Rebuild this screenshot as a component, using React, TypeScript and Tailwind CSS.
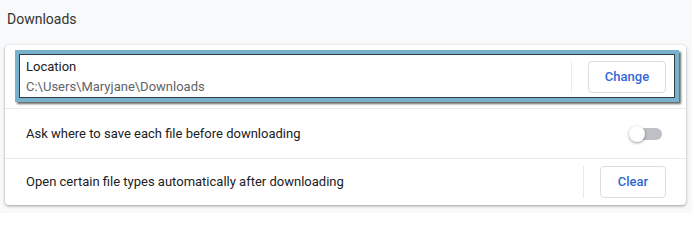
const Separator = () => <div className="w-px h-8 bg-[#e8eaed]" />;

const OutlineButton = ({ label, width }: { label: string; width: string }) => (
  <button
    className={`h-8 ${width} rounded border border-[#dadce0] bg-white text-[13px] font-medium text-[#3367d6]`}
  >
    {label}
  </button>
);

const Toggle = () => (
  <div className="relative w-[34px] h-4 flex items-center">
    <div className="ml-[5px] w-[28px] h-3 rounded-full bg-[#bdc1c6]" />
    <div className="absolute left-0 top-0 w-4 h-4 rounded-full bg-white shadow-[0_1px_3px_rgba(0,0,0,0.4)]" />
  </div>
);

export default function App() {
  return (
    <div className="w-[692px] h-[213px] bg-[#f8f9fa] font-['Roboto',sans-serif] text-[13px] text-[#202124] overflow-hidden">
      {/* Section title */}
      <div className="pl-[7px] pt-[9px] h-[45px] text-[14px] text-[#333]">Downloads</div>

      {/* Card */}
      <div className="mx-[5px] w-[681px] bg-white rounded shadow-[0_1px_2px_rgba(60,64,67,0.3),0_1px_3px_1px_rgba(60,64,67,0.15)]">
        {/* Location */}
        <div className="relative h-[63px] pl-[21px] pr-5 flex items-center">
          <div className="flex-1 flex flex-col leading-5">
            <span>Location</span>
            <span className="text-[#5f6368]">C:\Users\Maryjane\Downloads</span>
          </div>
          <Separator />
          <div className="ml-4">
            <OutlineButton label="Change" width="w-[78px]" />
          </div>
          {/* annotation highlight */}
          <div className="pointer-events-none absolute left-[10px] right-[7px] top-[5px] bottom-[6px] border-4 border-[#78b1cb] shadow-[2px_2px_2px_rgba(0,0,0,0.6)]">
            <div className="w-full h-full border border-[#2f3d44]" />
          </div>
        </div>

        {/* Ask where */}
        <div className="h-[50px] pl-[21px] pr-[23px] flex items-center border-t border-[#e8eaed]">
          <span className="flex-1">Ask where to save each file before downloading</span>
          <Toggle />
        </div>

        {/* Open certain */}
        <div className="h-[47px] pl-[21px] pr-5 flex items-center border-t border-[#e8eaed]">
          <span className="flex-1">Open certain file types automatically after downloading</span>
          <Separator />
          <div className="ml-4">
            <OutlineButton label="Clear" width="w-[66px]" />
          </div>
        </div>
      </div>
    </div>
  );
}
